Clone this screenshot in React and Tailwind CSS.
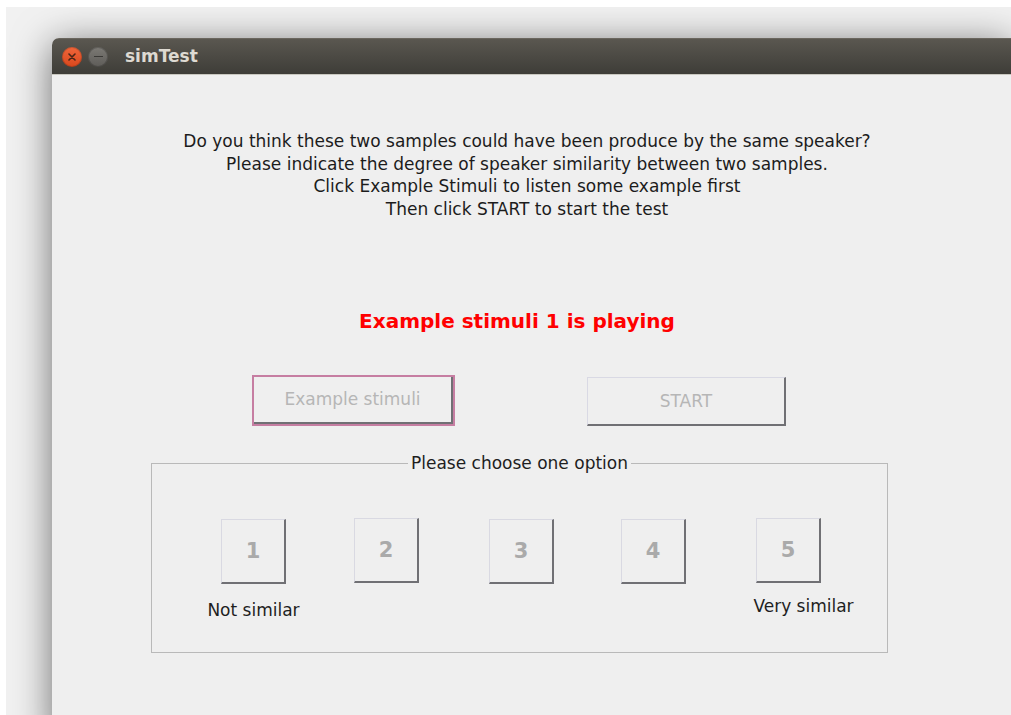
import React from "react"

const dialogFont = { fontFamily: '"DejaVu Sans", "Liberation Sans", sans-serif' }

const OptionButton = ({ value, label, className = "", labelClass = "" }) => (
    <div className={`flex w-[65px] flex-col items-center ${className}`}>
        <div className="flex h-[65px] w-[65px] shrink-0 items-center justify-center border-t border-l border-[#d9d9e2] border-r-2 border-b-2 border-r-[#707074] border-b-[#707074] text-[21px] font-bold text-[#aaaaaa]">
            {value}
        </div>
        {label && <span className={`text-[17px] whitespace-nowrap text-[#1e1e1e] ${labelClass}`}>{label}</span>}
    </div>
)

const WindowControls = () => (
    <div className="flex items-center gap-[6px] pl-[10px]">
        <div className="flex h-[20px] w-[20px] items-center justify-center rounded-full bg-gradient-to-b from-[#f0663a] to-[#d9471c] shadow-[inset_0_0_0_1px_rgba(0,0,0,0.15)]">
            <svg width="8" height="8" viewBox="0 0 8 8">
                <path d="M1 1 L7 7 M7 1 L1 7" stroke="#4a2516" strokeWidth="1.6" strokeLinecap="round" />
            </svg>
        </div>
        <div className="flex h-[20px] w-[20px] items-center justify-center rounded-full bg-gradient-to-b from-[#7c7a75] to-[#5e5c58] shadow-[inset_0_0_0_1px_rgba(0,0,0,0.2)]">
            <div className="h-[1.6px] w-[9px] bg-[#3a3936]" />
        </div>
    </div>
)

export default function App() {
    return (
        <div className="h-[715px] w-[1011px] overflow-hidden bg-white pl-[6px] pt-[7px]">
            <div className="flex h-full w-full overflow-hidden bg-[#f1f1f1] pl-[46px] pt-[31px]">
                <div className="flex h-[700px] flex-1 flex-col overflow-hidden rounded-tl-[7px] bg-[#efefef] shadow-[0_6px_38px_rgba(0,0,0,0.55)]">
                    {/* title bar */}
                    <div className="flex h-[37px] items-center border-t border-[#6a665e] border-b border-b-[#c9c8c0] bg-gradient-to-b from-[#5a5750] to-[#3e3d38]">
                        <WindowControls />
                        <span className="ml-[17px] text-[17px] font-bold text-[#dedad2]" style={{ fontFamily: '"DejaVu Sans", sans-serif' }}>
                            simTest
                        </span>
                    </div>

                    <div className="flex flex-col" style={dialogFont}>
                        <div className="mt-[55px] w-[950px] text-center text-[17px] leading-[22.6px] text-[#1c1c1c]">
                            <p>Do you think these two samples could have been produce by the same speaker?</p>
                            <p>Please indicate the degree of speaker similarity between two samples.</p>
                            <p>Click Example Stimuli to listen some example first</p>
                            <p>Then click START to start the test</p>
                        </div>

                        <p className="mt-[89px] w-[930px] text-center text-[20px] font-bold leading-[24px] text-[#ff0000]">
                            Example stimuli 1 is playing
                        </p>

                        <div className="mt-[42px] flex items-start pl-[200px]">
                            <div className="border-2 border-[#c67ea2]">
                                <div className="flex h-[47px] w-[199px] items-center justify-center border-r-2 border-b-2 border-[#707074] text-[17px] text-[#b6b6b6]">
                                    Example stimuli
                                </div>
                            </div>
                            <div className="ml-[132px] mt-[2px] flex h-[49px] w-[199px] items-center justify-center border-t border-l border-[#d9d9e4] border-r-2 border-b-2 border-r-[#707074] border-b-[#707074] text-[17px] text-[#b6b6b6]">
                                START
                            </div>
                        </div>

                        <fieldset className="ml-[99px] mt-[26px] h-[201px] w-[737px] border border-[#b9b9b9] px-0 pt-[45px]">
                            <legend className="mx-auto px-[3px] text-[17px] leading-[22px] text-[#1e1e1e]">Please choose one option</legend>
                            <div className="flex items-start pl-[69px]">
                                <OptionButton value="1" label="Not similar" labelClass="mt-[14px]" />
                                <OptionButton value="2" className="-mt-[1px] ml-[68px]" />
                                <OptionButton value="3" className="ml-[70px]" />
                                <OptionButton value="4" className="ml-[67px]" />
                                <OptionButton value="5" label="Very similar" className="-mt-[1px] ml-[70px]" labelClass="mt-[11px] translate-x-[15px]" />
                            </div>
                        </fieldset>
                    </div>
                </div>
            </div>
        </div>
    )
}
